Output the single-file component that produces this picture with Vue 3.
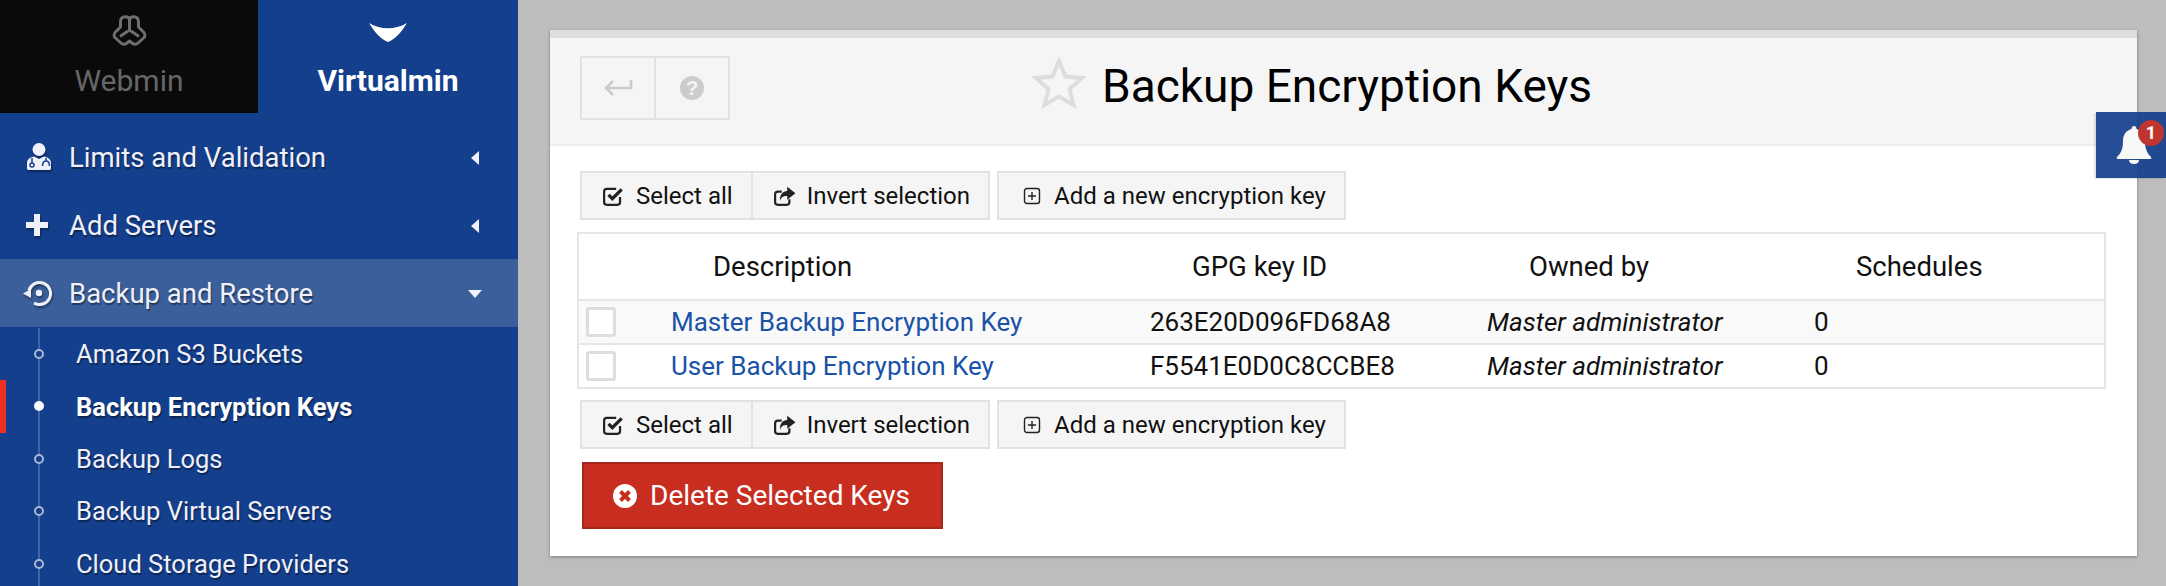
<template>
  <div class="page">
    <aside class="sidebar">
      <div class="tabs">
        <div class="tab tab-webmin">
          <svg class="tab-icon" width="35" height="34" viewBox="0 0 35 34" fill="none" stroke="#6e6e6e" stroke-width="3" stroke-linejoin="round">
            <path d="M17.500 5 C17.500 2.500 15 1.800 13 1.800 C10 1.800 8.500 4 8.500 7 V12 L3.500 17 C1 19.500 2 22.500 4 23.500 L9 28 C11 30 13 29.500 15 28 L17.500 26 L20 28 C22 29.500 24 30 26 28 L31 23.500 C33 22.500 34 19.500 31.500 17 L26.500 12 V7 C26.500 4 25 1.800 22 1.800 C20 1.800 17.500 2.500 17.500 5 V15 M17.500 15 L8 21.500 M17.500 15 L27 21.500" />
          </svg>
          <span>Webmin</span>
        </div>
        <div class="tab tab-virtualmin">
          <svg class="tab-icon" width="38" height="34" viewBox="0 0 38 34">
            <path fill="#fff" d="M0 8 C10 14 24 16 38 8 C32 18 25 25 19 27 C13 25 6 18 0 8 Z" />
          </svg>
          <span>Virtualmin</span>
        </div>
      </div>

      <nav class="menu">
        <div class="menu-item">
          <svg class="menu-icon" width="26" height="28" viewBox="0 0 26 28">
            <circle cx="13" cy="6.500" r="6.500" fill="#f0f0fa" />
            <path fill="#f0f0fa" d="M1 25 V20 C1 16 5 14 8 13.500 L13 16 L18 13.500 C21 14 25 16 25 20 V25 C25 27 24 27 22 27 H4 C2 27 1 27 1 25 Z" />
            <g fill="none" stroke="#143f8c" stroke-width="1.500">
              <circle cx="6" cy="22" r="2" />
              <path d="M6 20 V15 M20 15 V18 C17 18 16.500 20 16.500 23 M20 18 C23 18 23.500 20 23.500 23" />
            </g>
          </svg>
          <span class="menu-label">Limits and Validation</span>
          <i class="arrow-left"></i>
        </div>
        <div class="menu-item">
          <svg class="menu-icon" width="22" height="22" viewBox="0 0 22 22">
            <path fill="#f0f0fa" d="M8 0 H14 V8 H22 V14 H14 V22 H8 V14 H0 V8 H8 Z" />
          </svg>
          <span class="menu-label">Add Servers</span>
          <i class="arrow-left"></i>
        </div>
        <div class="menu-item active">
          <svg class="menu-icon history" width="30" height="26" viewBox="0 0 30 26">
            <path fill="none" stroke="#f0f0fa" stroke-width="3" d="M6 10.500 A11 11 0 1 1 11 23" />
            <path fill="#f0f0fa" d="M0 13.500 L8 9 V18 Z" />
            <circle cx="16" cy="13" r="3.200" fill="#f0f0fa" />
          </svg>
          <span class="menu-label">Backup and Restore</span>
          <i class="arrow-down"></i>
        </div>
        <ul class="submenu">
          <li v-for="item in subItems" :key="item.label" class="sub-item" :class="{ current: item.current }">
            <span class="dot"></span>
            {{ item.label }}
          </li>
        </ul>
      </nav>
    </aside>

    <main class="main">
      <section class="panel">
        <header class="panel-head">
          <div class="btn-group head-buttons">
            <button class="head-btn">
              <svg width="30" height="22" viewBox="0 0 30 22" fill="none" stroke="#ccc" stroke-width="2.600">
                <path d="M28 3 V11 H3 M10 4 L3 11 L10 18" />
              </svg>
            </button>
            <button class="head-btn">
              <span class="help">?</span>
            </button>
          </div>
          <div class="title">
            <svg class="star" width="54" height="52" viewBox="0 0 54 52" fill="none" stroke="#ddd" stroke-width="4" stroke-linejoin="miter">
              <path d="M27 4 L33.500 19.500 L50 21 L37.500 32 L41.500 48 L27 39.500 L12.500 48 L16.500 32 L4 21 L20.500 19.500 Z" />
            </svg>
            <h1>Backup Encryption Keys</h1>
          </div>
        </header>

        <div class="panel-body">
          <div class="toolbar">
            <div class="btn-group">
              <button class="tool-btn">
                <svg width="22" height="20" viewBox="0 0 20 18" fill="none" stroke="#222" stroke-width="2"><path d="M15.500 10 V14.500 C15.500 16 14.500 17 13 17 H3.500 C2 17 1 16 1 14.500 V5 C1 3.500 2 2.500 3.500 2.500 H12" /><path stroke-width="3" d="M5 8 L8.500 11.500 L17 3" /></svg>
                Select all
              </button>
              <button class="tool-btn">
                <svg width="22" height="20" viewBox="0 0 20 18"><path fill="none" stroke="#222" stroke-width="2" d="M14 12 V14.500 C14 16 13 17 11.500 17 H3.500 C2 17 1 16 1 14.500 V7.500 C1 6 2 5 3.500 5 H7" /><path fill="#222" d="M12 0.500 L19.500 6.500 L12 12.500 V9 C8.500 9 6.500 10 5.500 13.500 C5 8 8 4.500 12 4.500 Z" /></svg>
                Invert selection
              </button>
            </div>
            <button class="tool-btn single">
              <svg width="18" height="18" viewBox="0 0 18 18" fill="none" stroke="#222" stroke-width="1.400"><rect x="1.500" y="1.500" width="15" height="15" rx="2.500" /><path d="M9 5 V13 M5 9 H13" /></svg>
              Add a new encryption key
            </button>
          </div>

          <table class="keys">
            <colgroup>
              <col class="c-check" />
              <col class="c-desc" />
              <col class="c-gpg" />
              <col class="c-owner" />
              <col />
            </colgroup>
            <thead>
              <tr>
                <th></th>
                <th>Description</th>
                <th>GPG key ID</th>
                <th>Owned by</th>
                <th>Schedules</th>
              </tr>
            </thead>
            <tbody>
              <tr v-for="key in keys" :key="key.id">
                <td><span class="check"></span></td>
                <td><a href="#" class="key-link">{{ key.name }}</a></td>
                <td>{{ key.id }}</td>
                <td class="owner">{{ key.owner }}</td>
                <td>{{ key.schedules }}</td>
              </tr>
            </tbody>
          </table>

          <div class="toolbar bottom">
            <div class="btn-group">
              <button class="tool-btn">
                <svg width="22" height="20" viewBox="0 0 20 18" fill="none" stroke="#222" stroke-width="2"><path d="M15.500 10 V14.500 C15.500 16 14.500 17 13 17 H3.500 C2 17 1 16 1 14.500 V5 C1 3.500 2 2.500 3.500 2.500 H12" /><path stroke-width="3" d="M5 8 L8.500 11.500 L17 3" /></svg>
                Select all
              </button>
              <button class="tool-btn">
                <svg width="22" height="20" viewBox="0 0 20 18"><path fill="none" stroke="#222" stroke-width="2" d="M14 12 V14.500 C14 16 13 17 11.500 17 H3.500 C2 17 1 16 1 14.500 V7.500 C1 6 2 5 3.500 5 H7" /><path fill="#222" d="M12 0.500 L19.500 6.500 L12 12.500 V9 C8.500 9 6.500 10 5.500 13.500 C5 8 8 4.500 12 4.500 Z" /></svg>
                Invert selection
              </button>
            </div>
            <button class="tool-btn single">
              <svg width="18" height="18" viewBox="0 0 18 18" fill="none" stroke="#222" stroke-width="1.400"><rect x="1.500" y="1.500" width="15" height="15" rx="2.500" /><path d="M9 5 V13 M5 9 H13" /></svg>
              Add a new encryption key
            </button>
          </div>

          <button class="delete-btn">
            <svg width="24" height="24" viewBox="0 0 24 24">
              <circle cx="12" cy="12" r="12" fill="#fff" />
              <path d="M7.500 7.500 L16.500 16.500 M16.500 7.500 L7.500 16.500" stroke="#c82e1f" stroke-width="4" />
            </svg>
            Delete Selected Keys
          </button>
        </div>
      </section>
    </main>

    <div class="notify">
      <svg width="36" height="38" viewBox="0 0 36 38">
        <path fill="#f8f8f8" d="M18 0 C20 0 20.500 2 20.500 3 C26 4.500 29 9 29 15 C29 23 31 27 35 31 C36 32.500 35 33 33 33 H3 C1 33 0 32.500 1 31 C5 27 7 23 7 15 C7 9 10 4.500 15.500 3 C15.500 2 16 0 18 0 Z" />
        <path fill="#f8f8f8" d="M13 34 H23 C23 36.500 21 38 18 38 C15 38 13 36.500 13 34 Z" />
      </svg>
      <span class="badge">1</span>
    </div>
  </div>
</template>

<script setup>
const subItems = [
  { label: 'Amazon S3 Buckets' },
  { label: 'Backup Encryption Keys', current: true },
  { label: 'Backup Logs' },
  { label: 'Backup Virtual Servers' },
  { label: 'Cloud Storage Providers' },
]

const keys = [
  { name: 'Master Backup Encryption Key', id: '263E20D096FD68A8', owner: 'Master administrator', schedules: 0 },
  { name: 'User Backup Encryption Key', id: 'F5541E0D0C8CCBE8', owner: 'Master administrator', schedules: 0 },
]
</script>

<style>
html, body {
  margin: 0;
  overflow: hidden;
}
</style>

<style scoped>
.page {
  position: relative;
  display: flex;
  width: 2166px;
  height: 586px;
  overflow: hidden;
  background: #bdbdbd;
  font-family: Roboto, "Liberation Sans", sans-serif;
}

.sidebar {
  flex: none;
  width: 518px;
  height: 586px;
  background: #143f8c;
  overflow: hidden;
}

.tabs {
  display: flex;
  height: 113px;
}

.tab {
  display: flex;
  flex-direction: column;
  align-items: center;
  font-size: 30px;
  line-height: 32px;
}

.tab-icon {
  margin-top: 15px;
  margin-bottom: 16px;
}

.tab-webmin {
  width: 258px;
  background: #0a0a0a;
  color: #666;
}

.tab-virtualmin {
  flex: 1;
  color: #fff;
  font-weight: 700;
}

.menu {
  padding-top: 10px;
}

.menu-item {
  position: relative;
  display: flex;
  align-items: center;
  height: 68px;
  color: #f0f0fa;
  font-size: 27.500px;
  text-shadow: 1px 2px 1px rgba(0, 0, 0, 0.4);
}

.menu-item.active {
  background: #3a5f9b;
}

.menu-icon {
  position: absolute;
  left: 26px;
  top: 50%;
  transform: translate(0, -50%);
  filter: drop-shadow(1px 2px 1px rgba(0, 0, 0, 0.4));
}

.menu-icon.history {
  left: 23px;
}

.menu-label {
  margin-left: 69px;
}

.arrow-left {
  position: absolute;
  right: 39px;
  top: 28px;
  border-top: 7px solid transparent;
  border-bottom: 7px solid transparent;
  border-right: 8px solid #f0f0fa;
}

.arrow-down {
  position: absolute;
  right: 36px;
  top: 31px;
  border-left: 7px solid transparent;
  border-right: 7px solid transparent;
  border-top: 8px solid #f0f0fa;
}

.submenu {
  position: relative;
  margin: 1px 0 0;
  padding: 0;
  list-style: none;
}

.submenu::before {
  content: "";
  position: absolute;
  left: 38px;
  top: 0;
  bottom: 0;
  width: 2px;
  background: rgba(255, 255, 255, 0.2);
}

.sub-item {
  position: relative;
  display: flex;
  align-items: center;
  height: 52.400px;
  padding-left: 76px;
  color: #f0f0fa;
  font-size: 25.500px;
  text-shadow: 1px 2px 1px rgba(0, 0, 0, 0.4);
}

.sub-item.current {
  color: #fff;
  font-weight: 700;
}

.sub-item.current::before {
  content: "";
  position: absolute;
  left: 0;
  top: 0;
  bottom: 0;
  width: 6px;
  background: #f03024;
}

.dot {
  position: absolute;
  left: 34px;
  top: 21px;
  width: 6px;
  height: 6px;
  border: 2px solid #a9b8d4;
  border-radius: 50%;
  background: #143f8c;
}

.current .dot {
  background: #fff;
  border-color: #fff;
}

.main {
  flex: 1;
  padding: 30px 29px 0 32px;
}

.panel {
  height: 526px;
  box-sizing: border-box;
  background: #fff;
  border-top: 8px solid #ddd;
  box-shadow: 0 1px 3px rgba(0, 0, 0, 0.35);
}

.panel-head {
  position: relative;
  display: flex;
  align-items: center;
  box-sizing: border-box;
  height: 108px;
  padding: 0 0 6px 30px;
  background: #f5f5f5;
  border-bottom: 2px solid #eee;
}

.btn-group {
  display: flex;
}

.head-buttons {
  height: 64px;
}

.head-btn {
  display: flex;
  align-items: center;
  justify-content: center;
  width: 76px;
  padding: 0;
  background: #f5f5f5;
  border: 2px solid #e2e2e2;
}

.head-btn + .head-btn {
  margin-left: -2px;
}

.help {
  width: 24px;
  height: 24px;
  border-radius: 50%;
  background: #ccc;
  color: #f5f5f5;
  font-size: 20px;
  font-weight: 900;
  line-height: 24px;
}

.title {
  display: flex;
  align-items: center;
  gap: 16px;
  margin: -5px 0 0 302px;
}

.star {
  margin-bottom: 6px;
}

h1 {
  margin: 0;
  font-size: 46px;
  font-weight: 400;
  color: #000;
}

.panel-body {
  padding: 25px 31px 0 30px;
}

.toolbar {
  display: flex;
  gap: 7px;
  height: 49px;
}

.toolbar.bottom {
  margin-top: 11px;
}

.tool-btn {
  display: flex;
  align-items: center;
  gap: 11px;
  padding: 0 18px 0 21px;
  background: #f5f5f5;
  border: 2px solid #e2e2e2;
  color: #111;
  font-family: inherit;
  font-size: 24px;
}

.tool-btn.single {
  gap: 13px;
  padding-left: 24px;
}

.btn-group .tool-btn + .tool-btn {
  margin-left: -2px;
}

.keys {
  width: 1529px;
  margin: 12px 0 0 -3px;
  table-layout: fixed;
  border-collapse: collapse;
  font-size: 26px;
  color: #111;
}

.c-check { width: 93px; }
.c-desc { width: 479px; }
.c-gpg { width: 337px; }
.c-owner { width: 327px; }

.keys th,
.keys td {
  padding: 0;
  text-align: left;
  border-top: 2px solid #e6e6e6;
  border-bottom: 2px solid #e6e6e6;
}

.keys th:first-child,
.keys td:first-child {
  border-left: 2px solid #e6e6e6;
}

.keys th:last-child,
.keys td:last-child {
  border-right: 2px solid #e6e6e6;
}

.keys th {
  height: 65px;
  padding-left: 42px;
  font-size: 27.500px;
  font-weight: 400;
}

.keys td {
  height: 42px;
}

.keys tbody tr:first-child td {
  background: #f9f9f9;
}

.key-link {
  color: #1a52a8;
  text-decoration: none;
}

.owner {
  font-style: italic;
}

.check {
  display: block;
  box-sizing: border-box;
  width: 30px;
  height: 30px;
  margin-left: 7px;
  background: #fff;
  border: 3px solid #ddd;
  border-radius: 3px;
}

.delete-btn {
  display: flex;
  align-items: center;
  gap: 13px;
  width: 361px;
  height: 67px;
  margin: 13px 0 0 2px;
  padding: 0 0 0 29px;
  background: #c82e1f;
  border: 2px solid #a5281b;
  color: #fff;
  font-family: inherit;
  font-size: 28px;
}

.notify {
  position: absolute;
  top: 112px;
  right: 0;
  display: flex;
  align-items: center;
  justify-content: center;
  width: 70px;
  height: 66px;
  background: rgba(20, 63, 140, 0.92);
  box-shadow: -2px 1px 0 rgba(0, 0, 0, 0.1);
}

.notify svg {
  margin-left: 6px;
}

.badge {
  position: absolute;
  top: 8px;
  right: 2px;
  width: 26px;
  height: 26px;
  border-radius: 50%;
  background: #c13530;
  color: #fff;
  font-size: 18px;
  font-weight: 700;
  line-height: 26px;
  text-align: center;
}
</style>
